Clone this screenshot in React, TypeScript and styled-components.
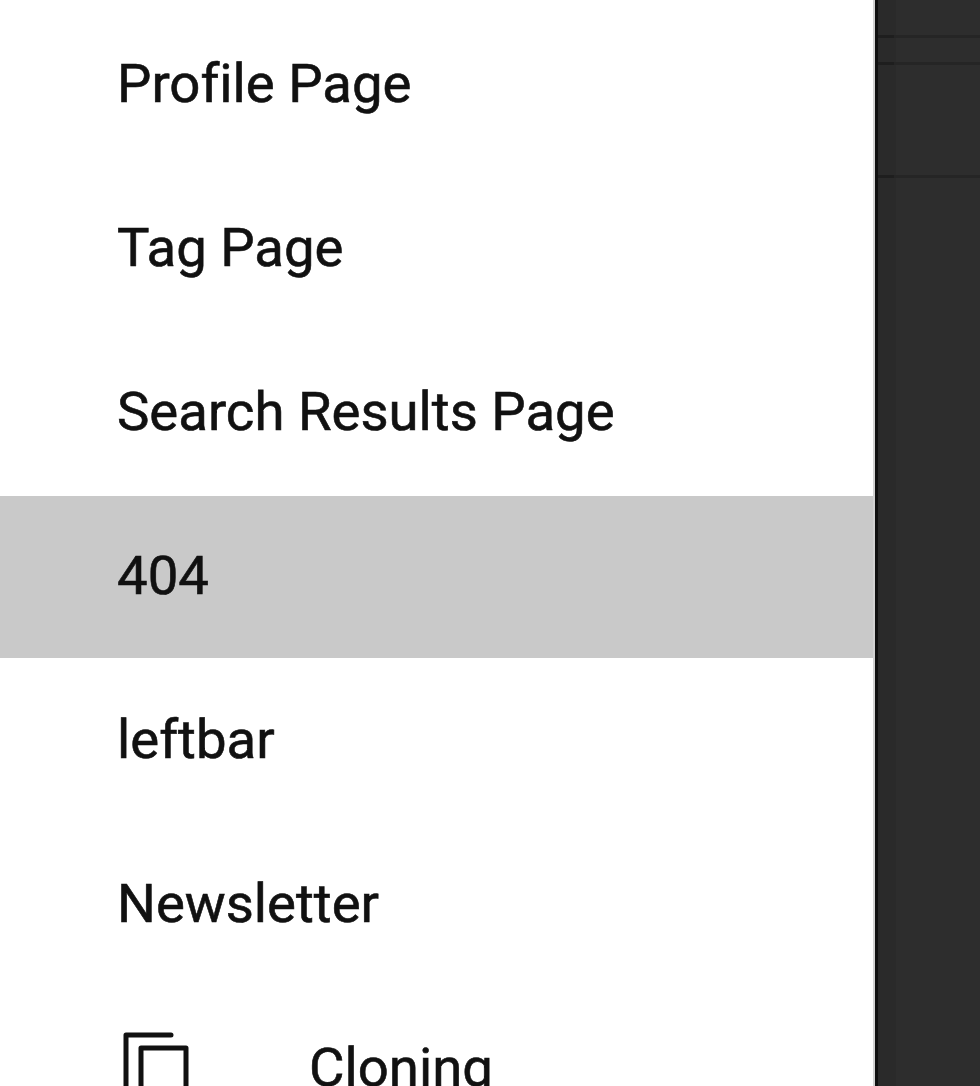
import React from "react";
import styled, { createGlobalStyle } from "styled-components";

const Global = createGlobalStyle`
  html, body {
    margin: 0;
    height: 100%;
    overflow: hidden;
    background: #fff;
  }
`;

const Page = styled.div`
  display: flex;
  width: 980px;
  height: 1086px;
  overflow: hidden;
`;

const Menu = styled.ul`
  flex: 0 0 875px;
  box-sizing: border-box;
  margin: 0;
  padding: 4px 0 0;
  list-style: none;
  background: #fff;
  border-right: 2px solid #d2d2d2;
  font-family: Roboto, "Liberation Sans", sans-serif;
  font-size: 54.5px;
  font-variant-ligatures: none;
  -webkit-text-stroke: 0.6px #111;
  color: #111;
`;

const Row = styled.li<{ $active?: boolean }>`
  display: flex;
  align-items: center;
  box-sizing: border-box;
  height: 162px;
  margin-bottom: 2px;
  padding: 0 0 4px 117px;
  background: ${p => (p.$active ? "#c9c9c9" : "transparent")};
`;

const IconSlot = styled.span`
  display: flex;
  width: 192px;
`;

const Side = styled.aside`
  flex: 1;
  display: flex;
  flex-direction: column;
  background: linear-gradient(to right, #2a2a2a 18px, #2d2d2d 18px);
  border-left: 3px solid #101010;
`;

const SideBand = styled.div<{ $h: number }>`
  height: ${p => p.$h}px;
  box-sizing: border-box;
  border-bottom: 3px solid #252525;
  border-image: linear-gradient(to right, #1e1e1e 17px, #252525 17px) 1;
`;

const items = ["Profile Page", "Tag Page", "Search Results Page", "404", "leftbar", "Newsletter"];

const CopyIcon = () => (
  <svg width="72" height="72" viewBox="0 0 72 72" fill="none" stroke="#111" strokeWidth="5" strokeLinecap="round" strokeLinejoin="round">
    <path d="M54 4H9V80" />
    <path d="M24 80V17H69V80" />
  </svg>
);

export default function App() {
  return (
    <Page>
      <Global />
      <Menu>
        {items.map(name => (
          <Row key={name} $active={name === "404"}>
            {name}
          </Row>
        ))}
        <Row>
          <IconSlot>
            <CopyIcon />
          </IconSlot>
          Cloning
        </Row>
      </Menu>
      <Side>
        <SideBand $h={38} />
        <SideBand $h={27} />
        <SideBand $h={113} />
      </Side>
    </Page>
  );
}
